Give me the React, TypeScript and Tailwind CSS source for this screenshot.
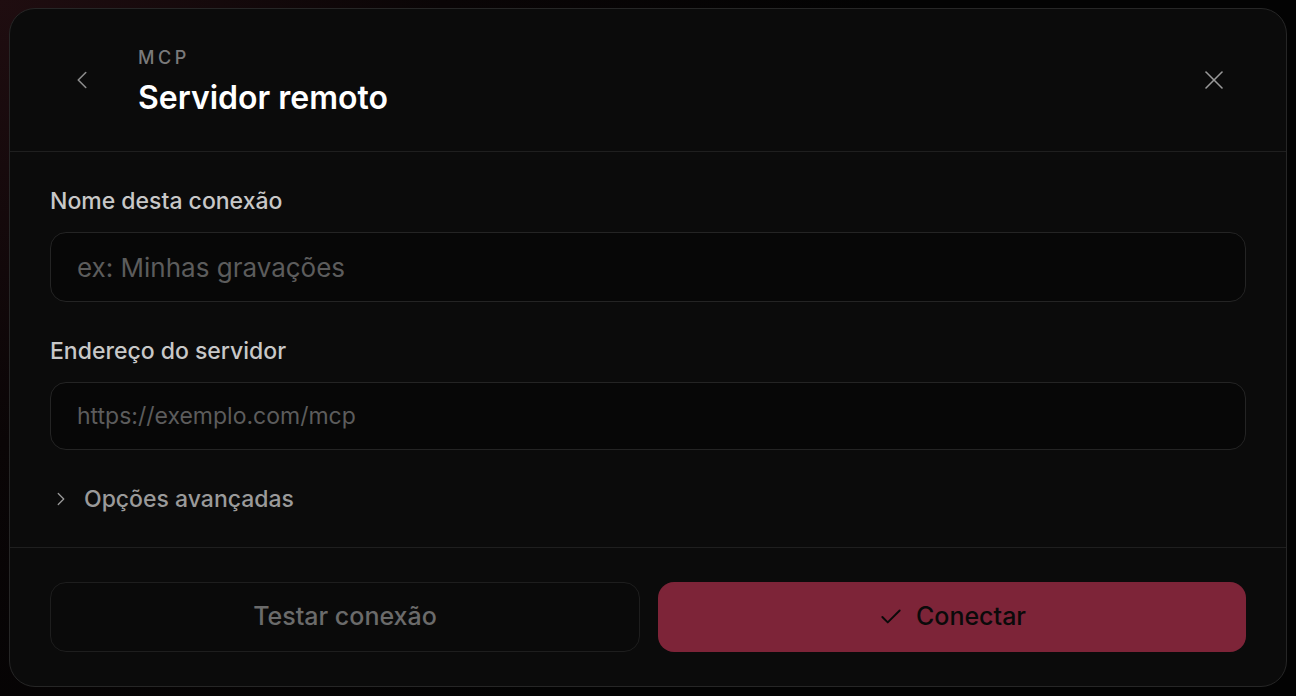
import { ChevronLeft, ChevronRight, X, Check } from "lucide-react";

export default function App() {
  return (
    <div
      className="w-[1296px] h-[696px] overflow-hidden bg-[#030303] bg-[radial-gradient(circle_at_0%_0%,#1f0d10_0%,#0a0506_30%,#030303_60%)] pt-[8px] pl-[9px]"
      style={{ fontFamily: "Inter, 'Noto Sans', sans-serif" }}
    >
      <div className="w-[1278px] h-[679px] rounded-[26px] border border-[#262626] bg-[#0b0b0b] flex flex-col overflow-hidden">
        {/* header */}
        <div className="h-[143px] shrink-0 flex items-center pl-[52px] pr-[52px] border-b border-[#1f1f1f]">
          <button className="w-10 h-10 flex items-center justify-center text-[#8a8a8a]">
            <ChevronLeft size={30} strokeWidth={1.3} />
          </button>
          <div className="ml-[36px] mt-[3px] flex flex-col">
            <span className="text-[18px] leading-[22px] font-medium tracking-[0.2em] text-[#7a7a7a]">
              MCP
            </span>
            <h1 className="mt-[10px] text-[32px] leading-[38px] font-semibold text-white">
              Servidor remoto
            </h1>
          </div>
          <button className="ml-auto w-10 h-10 flex items-center justify-center text-[#9a9a9a]">
            <X size={32} strokeWidth={1.2} />
          </button>
        </div>

        {/* body */}
        <div className="flex flex-col px-10 pt-[35px] pb-[34px] border-b border-[#1f1f1f]">
          <label className="text-[23px] leading-[28px] font-medium text-[#c8c8c8]">
            Nome desta conexão
          </label>
          <div className="mt-[17px] h-[70px] rounded-[16px] border border-[#242424] bg-[#070707] flex items-center px-[26px]">
            <span className="text-[26px] text-[#5c5c5c]">ex: Minhas gravações</span>
          </div>

          <label className="mt-[35px] text-[23px] leading-[28px] font-medium text-[#c8c8c8]">
            Endereço do servidor
          </label>
          <div className="mt-[17px] h-[68px] rounded-[16px] border border-[#242424] bg-[#070707] flex items-center px-[26px]">
            <span className="text-[23px] text-[#5c5c5c]">https://exemplo.com/mcp</span>
          </div>

          <div className="mt-[35px] flex items-center h-[28px] text-[#9a9a9a]">
            <ChevronRight size={22} strokeWidth={1.4} />
            <span className="ml-[12px] text-[23px] leading-[28px] font-medium">Opções avançadas</span>
          </div>
        </div>

        {/* footer */}
        <div className="grid grid-cols-[590px_1fr] gap-[18px] px-10 pt-[34px]">
          <button className="h-[70px] rounded-[16px] border border-[#1e1e1e] bg-[#0a0a0a] text-[25px] font-medium text-[#6b6b6b]">
            Testar conexão
          </button>
          <button className="h-[70px] rounded-[16px] bg-[#7d2438] flex items-center justify-center gap-[12px] text-[25px] font-medium text-[#0a0a0a]">
            <Check size={26} strokeWidth={1.8} />
            Conectar
          </button>
        </div>
      </div>
    </div>
  );
}
